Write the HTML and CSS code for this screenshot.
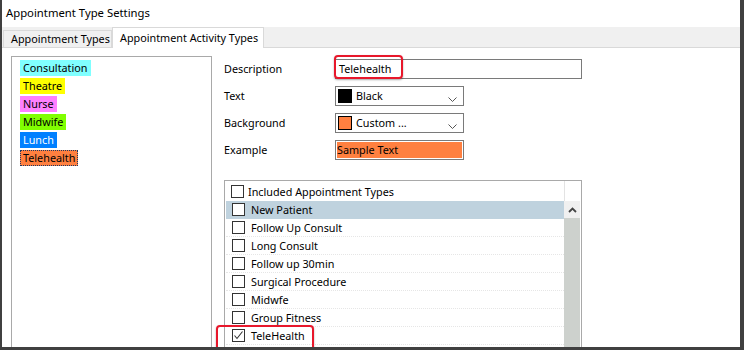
FILE: index.html
```html
<!DOCTYPE html>
<html lang="en">
<head>
	<meta charset="UTF-8">
	<title>Appointment Type Settings</title>
	<link rel="stylesheet" href="styles.css">
</head>
<body>

<div class="window">
	<div class="title">Appointment Type Settings</div>

	<div class="tabs">
		<div class="tab">Appointment Types</div>
		<div class="tab active">Appointment Activity Types</div>
	</div>

	<div class="page">
		<div class="typelist">
			<span class="item cyan">Consultation</span>
			<span class="item yellow">Theatre</span>
			<span class="item pink">Nurse</span>
			<span class="item green">Midwife</span>
			<span class="item blue">Lunch</span>
			<span class="item orange focus">Telehealth</span>
		</div>

		<div class="details">
			<div class="form">
				<div class="row">
					<span class="label">Description</span>
					<div class="field desc">Telehealth<span class="mark markDesc"></span></div>
				</div>
				<div class="row">
					<span class="label">Text</span>
					<div class="field combo">
						<span class="swatch black"></span>Black
						<svg class="chev" width="9" height="5" viewBox="0 0 9 5"><polyline points="0.5,0.5 4.5,4.5 8.5,0.5" fill="none" stroke="#555" stroke-width="1"/></svg>
					</div>
				</div>
				<div class="row">
					<span class="label">Background</span>
					<div class="field combo">
						<span class="swatch orangeSw"></span>Custom ...
						<svg class="chev" width="9" height="5" viewBox="0 0 9 5"><polyline points="0.5,0.5 4.5,4.5 8.5,0.5" fill="none" stroke="#555" stroke-width="1"/></svg>
					</div>
				</div>
				<div class="row">
					<span class="label">Example</span>
					<div class="field sample">Sample Text</div>
				</div>
			</div>

			<div class="checklist">
				<div class="checkrows">
					<div class="head"><span class="box"></span>Included Appointment Types</div>
					<div class="crow selected"><span class="box"></span>New Patient</div>
					<div class="crow"><span class="box"></span>Follow Up Consult</div>
					<div class="crow"><span class="box"></span>Long Consult</div>
					<div class="crow"><span class="box"></span>Follow up 30min</div>
					<div class="crow"><span class="box"></span>Surgical Procedure</div>
					<div class="crow"><span class="box"></span>Midwfe</div>
					<div class="crow"><span class="box"></span>Group Fitness</div>
					<div class="crow">
						<span class="box"><svg width="11" height="11" viewBox="0 0 11 11"><polyline points="1.5,5.5 4,8.5 9.5,1.5" fill="none" stroke="#333" stroke-width="1.1"/></svg></span>TeleHealth
						<span class="mark markTele"></span>
					</div>
				</div>
				<div class="vscroll">
					<div class="vtop"></div>
					<div class="vbtn">
						<svg width="9" height="6" viewBox="0 0 9 6"><polyline points="1,5 4.5,1.5 8,5" fill="none" stroke="#444" stroke-width="1.8"/></svg>
					</div>
					<div class="vthumb"></div>
				</div>
			</div>
		</div>
	</div>
</div>

</body>
</html>
```

FILE: styles.css
```css
body {
	margin: 0;
	font-family: "Noto Sans", "Open Sans", sans-serif;
	font-size: 10.8px;
	color: #000;
	background: #fff;
}

.window {
	width: 744px;
	height: 350px;
	box-sizing: border-box;
	border-left: 2px solid #404040;
	border-right: 4px solid #404040;
	border-bottom: 3px solid #404040;
	display: flex;
	flex-direction: column;
	overflow: hidden;
	background: #fff;
}

.title {
	height: 27px;
	line-height: 26px;
	padding-left: 4px;
	font-size: 11.3px;
}

/* tab strip */
.tabs {
	display: flex;
	align-items: flex-end;
	height: 20px;
	background: #f0f0f0;
	border-bottom: 1px solid #d9d9d9;
}

.tab {
	width: 109px;
	height: 17px;
	line-height: 16px;
	box-sizing: border-box;
	margin-left: 1px;
	padding-left: 7px;
	background: #f0f0f0;
	border: 1px solid #d9d9d9;
	border-bottom: none;
}

.tab.active {
	width: 152px;
	height: 21px;
	line-height: 20px;
	margin-left: 0;
	margin-bottom: -1px;
	background: #fff;
}

/* page */
.page {
	flex: 1;
	display: flex;
	padding: 8px 0 0 9px;
}

.typelist {
	width: 201px;
	box-sizing: border-box;
	border: 1px solid #a9a9a9;
	border-bottom: none;
	padding: 3px 0 0 8px;
	display: flex;
	flex-direction: column;
	align-items: flex-start;
	gap: 2px;
}

.item {
	height: 16px;
	line-height: 16px;
	padding: 0 3px;
	box-sizing: border-box;
}

.cyan { background: #80ffff; }
.yellow { background: #ffff00; }
.pink { background: #ff80ff; }
.green { background: #80ff00; }
.blue { background: #0080ff; color: #fff; }
.orange { background: #ff8040; }

.focus {
	outline: 1px dotted #1a3a66;
	outline-offset: -1px;
}

.details {
	margin-left: 12px;
	width: 358px;
	padding-top: 3px;
	display: flex;
	flex-direction: column;
}

.form {
	display: flex;
	flex-direction: column;
	gap: 7px;
}

.row {
	display: flex;
	align-items: center;
	height: 20px;
}

.label {
	width: 111px;
	line-height: 18px;
}

.field {
	position: relative;
	height: 20px;
	box-sizing: border-box;
	border: 1px solid #7a7a7a;
	line-height: 18px;
	padding-left: 3px;
}

.desc {
	width: 247px;
}

.combo {
	width: 129px;
	display: flex;
	align-items: center;
	padding-left: 2px;
}

.swatch {
	width: 14px;
	height: 14px;
	box-sizing: border-box;
	margin-right: 4px;
}

.black { background: #000; }
.orangeSw { background: #ff8040; border: 1px solid #000; }

.chev {
	position: absolute;
	right: 6px;
	top: 10px;
}

.sample {
	width: 129px;
	padding: 1px;
	line-height: 16px;
	background: #ff8040;
	background-clip: content-box;
}

.mark {
	position: absolute;
	border: 2px solid #e8172b;
	border-radius: 4px;
	box-shadow: 0 1px 2px rgba(0, 0, 0, 0.35);
}

.markDesc {
	left: -2px;
	top: -5px;
	width: 65px;
	height: 20px;
}

.markTele {
	left: -10px;
	top: -2px;
	width: 94px;
	height: 24px;
}

/* checked list */
.checklist {
	flex: 1;
	margin-top: 20px;
	border: 1px solid #a9a9a9;
	border-bottom: none;
	display: flex;
}

.checkrows {
	flex: 1;
}

.head {
	height: 20px;
	display: flex;
	align-items: center;
	padding-left: 6px;
}

.head .box {
	margin-right: 4px;
}

.crow {
	position: relative;
	height: 18px;
	box-sizing: border-box;
	margin-left: 1px;
	padding-left: 6px;
	display: flex;
	align-items: center;
	border-bottom: 1px dotted #e6e6e6;
}

.crow.selected {
	background: #bfd2de;
	border-bottom-color: #bfd2de;
}

.box {
	width: 13px;
	height: 13px;
	box-sizing: border-box;
	border: 1px solid #333;
	background: #fff;
	margin-right: 6px;
	display: flex;
	align-items: center;
	justify-content: center;
}

.vscroll {
	width: 16px;
	padding-right: 1px;
	display: flex;
	flex-direction: column;
}

.vtop {
	height: 20px;
	border-left: 1px solid #e3e3e3;
}

.vbtn {
	height: 17px;
	background: #f0f0f0;
	display: flex;
	align-items: center;
	justify-content: center;
}

.vthumb {
	flex: 1;
	background: #cdd1cd;
}
```
